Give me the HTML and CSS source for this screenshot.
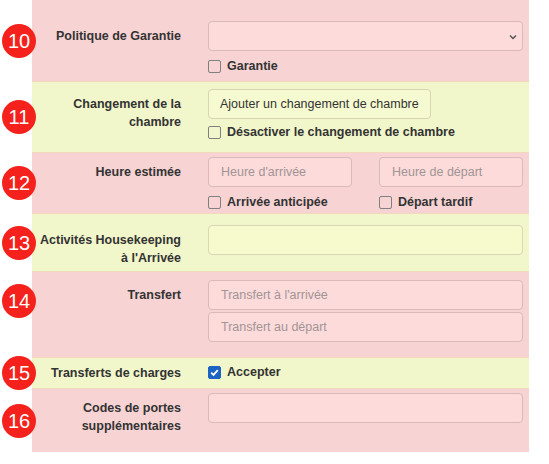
FILE: index.html
```html
<!DOCTYPE html>
<html lang="fr">
<head>
<meta charset="utf-8">
<link rel="stylesheet" href="styles.css">
</head>
<body>
<div class="panel">
  <div class="row pink r10">
    <span class="badge">10</span>
    <div class="label">Politique de Garantie</div>
    <div class="field">
      <div class="select"><svg class="chev" width="8" height="6" viewBox="0 0 8 6"><path d="M1 1.5 L4 4.5 L7 1.5" fill="none" stroke="#555" stroke-width="1.5"/></svg></div>
      <div class="check"><span class="box"></span>Garantie</div>
    </div>
  </div>
  <div class="row green r11">
    <span class="badge">11</span>
    <div class="label">Changement de la chambre</div>
    <div class="field">
      <div><span class="btn">Ajouter un changement de chambre</span></div>
      <div class="check c11"><span class="box"></span>Désactiver le changement de chambre</div>
    </div>
  </div>
  <div class="row pink r12">
    <span class="badge">12</span>
    <div class="label">Heure estimée</div>
    <div class="field two">
      <div class="col">
        <div class="input ph">Heure d'arrivée</div>
        <div class="check"><span class="box"></span>Arrivée anticipée</div>
      </div>
      <div class="col">
        <div class="input ph">Heure de départ</div>
        <div class="check"><span class="box"></span>Départ tardif</div>
      </div>
    </div>
  </div>
  <div class="row green r13">
    <span class="badge">13</span>
    <div class="label">Activités Housekeeping à l'Arrivée</div>
    <div class="field">
      <div class="input ginput"></div>
    </div>
  </div>
  <div class="row pink r14">
    <span class="badge b14">14</span>
    <div class="label">Transfert</div>
    <div class="field stack">
      <div class="input ph">Transfert à l'arrivée</div>
      <div class="input ph">Transfert au départ</div>
    </div>
  </div>
  <div class="row green r15">
    <span class="badge">15</span>
    <div class="label nopad">Transferts de charges</div>
    <div class="field">
      <div class="check c15"><span class="box checked"><svg width="11" height="11" viewBox="0 0 11 11"><path d="M2.2 5.6 L4.5 7.9 L8.8 3.2" fill="none" stroke="#fff" stroke-width="1.8"/></svg></span>Accepter</div>
    </div>
  </div>
  <div class="row pink r16">
    <span class="badge">16</span>
    <div class="label">Codes de portes supplémentaires</div>
    <div class="field">
      <div class="input"></div>
    </div>
  </div>
</div>
</body>
</html>
```

FILE: styles.css
```css
* { box-sizing: border-box; }
html, body { margin: 0; padding: 0; background: #fff; }
body {
  font-family: "Liberation Sans", Arial, sans-serif;
  font-size: 12.5px;
  color: #333;
  width: 549px;
  height: 464px;
  overflow: hidden;
}
.panel {
  margin-left: 32px;
  width: 497px;
}
.row {
  position: relative;
  display: grid;
  grid-template-columns: 149px 315px;
  column-gap: 27px;
  padding-right: 6px;
  border-bottom: 1px solid #f2d8bd;
}
.pink { background: #f7d3d3; }
.green { background: #f2f7cb; }
.r10 { padding-top: 21px; padding-bottom: 6px; }
.r11 { padding-top: 7px; padding-bottom: 11px; }
.r12 { padding-top: 4px; padding-bottom: 2px; }
.r13 { padding-top: 11px; padding-bottom: 4px; }
.r14 { padding-top: 8px; padding-bottom: 15px; }
.r15 { padding-top: 6px; padding-bottom: 6px; }
.r16 { padding-top: 4px; padding-bottom: 17px; border-bottom: none; }

.badge {
  position: absolute;
  left: -30px;
  top: 50%;
  transform: translateY(-50%);
  width: 34px;
  height: 34px;
  border-radius: 50%;
  background: #f5211c;
  color: #fff;
  font-size: 20px;
  line-height: 34px;
  text-align: center;
  z-index: 2;
}
.b14 { top: 12px; transform: none; }

.label {
  font-weight: bold;
  text-align: right;
  line-height: 18px;
  padding-top: 6px;
}
.label.nopad { padding-top: 0; }

.field { min-width: 0; }
.two { display: grid; grid-template-columns: 144px 144px; column-gap: 27px; }
.stack { display: flex; flex-direction: column; gap: 2px; }

.select, .input {
  position: relative;
  height: 30px;
  border: 1px solid #d9b9b9;
  border-radius: 4px;
  background: #fedbdb;
  padding: 0 12px;
  line-height: 28px;
}
.ph { color: #a09494; }
.ginput { background: #f6facd; border-color: #d7d8b4; }
.chev { position: absolute; right: 5px; top: 12px; }

.btn {
  display: inline-block;
  height: 30px;
  line-height: 28px;
  padding: 0 11px;
  border: 1px solid #d6d6b0;
  border-radius: 4px;
  background: #f6fad0;
  color: #333;
}

.check {
  display: flex;
  align-items: center;
  height: 17px;
  margin-top: 7px;
  font-weight: bold;
  line-height: 17px;
}
.c11 { margin-top: 5px; }
.c15 { margin-top: 0; }
.box {
  width: 13px;
  height: 13px;
  border: 1px solid #808080;
  border-radius: 2px;
  margin-right: 6px;
  flex: none;
  display: flex;
  align-items: center;
  justify-content: center;
}
.box.checked {
  background: #1b64c4;
  border-color: #1b64c4;
}
```
